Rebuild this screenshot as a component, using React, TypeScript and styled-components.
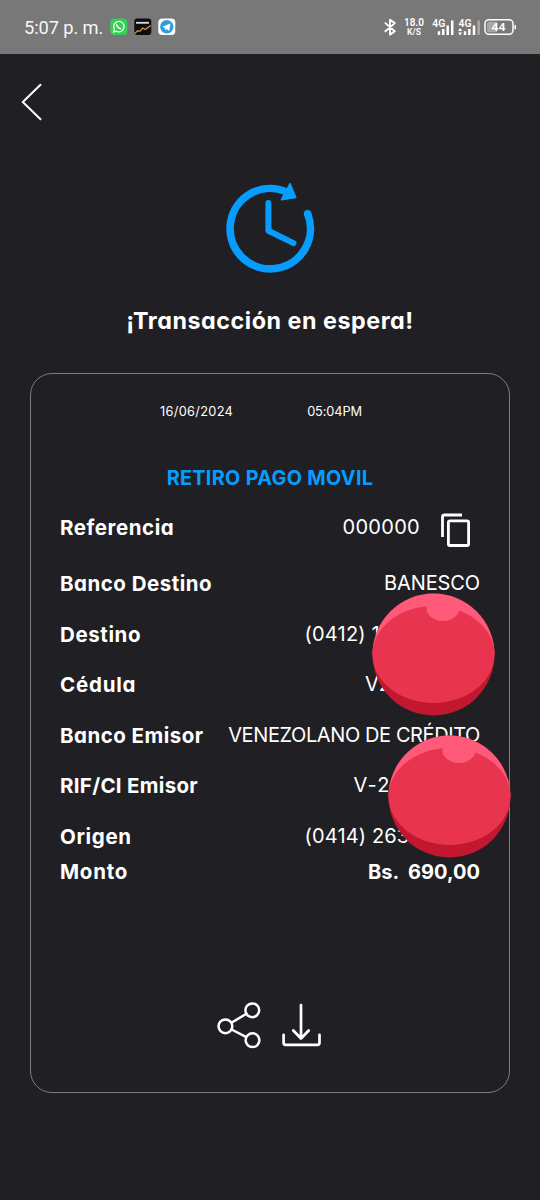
import React from 'react';
import styled, { createGlobalStyle } from 'styled-components';

const Global = createGlobalStyle`
  * { box-sizing: border-box; }
  body { margin: 0; background: #202024; }
`;

const Screen = styled.div`
  width: 540px;
  height: 1200px;
  display: flex;
  flex-direction: column;
  background: #202024;
  color: #fff;
  font-family: Inter, sans-serif;
  font-feature-settings: 'cv11';
`;

const StatusBar = styled.header`
  height: 54px;
  flex: none;
  padding: 0 23px 0 24px;
  display: flex;
  align-items: center;
  justify-content: space-between;
  background: #787878;
  font-family: Roboto, sans-serif;
`;

const Group = styled.div<{ $gap: number }>`
  display: flex;
  align-items: center;
  gap: ${(p) => p.$gap}px;
`;

const Clock = styled.span`
  margin-top: 1px;
  font-size: 18.3px;
  letter-spacing: -0.1px;
  line-height: 24px;
  color: #f6f6f6;
  white-space: nowrap;
`;

const Speed = styled.div`
  width: 20px;
  display: flex;
  flex-direction: column;
  align-items: center;
  font-weight: 600;
  white-space: nowrap;
`;

const SpeedValue = styled.span`
  font-size: 10px;
  line-height: 10px;
`;

const SpeedUnit = styled.span`
  font-size: 8.5px;
  line-height: 9px;
`;

const SvgText = styled.text`
  font-family: Roboto, sans-serif;
  font-weight: 600;
  fill: #fff;
`;

const NavBar = styled.nav`
  height: 96px;
  flex: none;
  padding: 29px 0 0 21px;
`;

const Hero = styled.section`
  height: 223px;
  flex: none;
  padding-top: 32px;
  display: flex;
  flex-direction: column;
  align-items: center;
`;

const Txt = styled.span<{ $size: number; $weight?: number; $ls?: number }>`
  font-size: ${(p) => p.$size}px;
  font-weight: ${(p) => p.$weight ?? 400};
  letter-spacing: ${(p) => p.$ls ?? 0}px;
  line-height: 28px;
  white-space: pre;
`;

const Heading = styled(Txt)`
  margin: 33px 0 0;
`;

const Card = styled.main`
  position: relative;
  height: 720px;
  flex: none;
  margin: 0 30px;
  padding: 24px 29px 0;
  border: 1px solid #7d7d81;
  border-radius: 22px;
  display: flex;
  flex-direction: column;
`;

const Stamp = styled.div`
  display: flex;
  gap: 74px;
  padding-left: 100px;
`;

const Kind = styled(Txt)`
  margin: 38px 0 5px;
  text-align: center;
  color: #079dff;
`;

const Row = styled.div<{ $h: number }>`
  height: ${(p) => p.$h}px;
  display: flex;
  align-items: center;
  justify-content: space-between;
`;

const Value = styled.div<{ $width?: number; $strong?: boolean }>`
  display: flex;
  align-items: center;
  width: ${(p) => (p.$width ? `${p.$width}px` : 'auto')};
  margin-top: ${(p) => (p.$strong ? 0 : -2)}px;
`;

const CopyIcon = styled.svg`
  margin: 5px 10px 0 21px;
`;

const Actions = styled.div`
  display: flex;
  gap: 21px;
  margin: 118px 0 0 157px;
`;

const Ball = styled.svg<{ $x: number; $y: number }>`
  position: absolute;
  left: ${(p) => p.$x}px;
  top: ${(p) => p.$y}px;
`;

type Item = {
  label: string;
  value: string;
  labelSpacing: number;
  valueSpacing?: number;
  width?: number;
  strong?: boolean;
  height?: number;
};

const rows: Item[] = [
  { label: 'Banco Destino', value: 'BANESCO', labelSpacing: 0.5, valueSpacing: -0.1 },
  { label: 'Destino', value: '(0412) 1', labelSpacing: 0.6, valueSpacing: 0.2, width: 175.5 },
  { label: 'Cédula', value: 'V2', labelSpacing: 0.8, width: 115 },
  { label: 'Banco Emisor', value: 'VENEZOLANO DE CRÉDITO', labelSpacing: 0.48, valueSpacing: -0.4 },
  { label: 'RIF/CI Emisor', value: 'V-2', labelSpacing: 0.3, valueSpacing: 1.2, width: 126.5 },
  { label: 'Origen', value: '(0414) 263', labelSpacing: 0.65, valueSpacing: 0.15, width: 175.5 },
  { label: 'Monto', value: 'Bs.  690,00', labelSpacing: 0.75, strong: true, height: 20.5 },
];

const RedBall = ({ x, y }: { x: number; y: number }) => (
  <Ball $x={x} $y={y} width="123" height="123" viewBox="-0.5 -0.5 123 123">
    <circle cx="61" cy="61" r="61" fill="#c1182f" />
    <path d="M0 61a61 61 0 0 1 122 0z" fill="#ff5a79" />
    <ellipse cx="61" cy="61" rx="61" ry="48.5" fill="#e8344f" />
    <ellipse cx="70.5" cy="15" rx="16.5" ry="12.5" fill="#ff5a79" />
  </Ball>
);

const AppIcons = () => (
  <svg width="66" height="18" viewBox="0 0 66 18" fill="none">
    <rect width="17" height="16.6" x=".3" y=".5" rx="4" fill="#35cf55" />
    <path d="M3.600 14l.8-2.800A5.200 5.200 0 1 1 6.500 13.200z" stroke="#fff" strokeWidth="1.200" />
    <path d="M6.800 6.200c-.8 1.500 2.600 5 4.400 4.200" stroke="#fff" strokeWidth="1.500" />
    <rect width="17" height="16.6" x="24.300" y=".5" rx="3" fill="#0c0c0d" />
    <path d="M26 4.800h13" stroke="#ddd" strokeWidth="1.800" />
    <path d="M24.600 15.500l3.200-2.800 2 .6 3-3.300 2.400 1.600L40.800 7.500" stroke="#e69a35" strokeWidth="1.200" />
    <rect width="17" height="16.6" x="48.300" y=".5" rx="4" fill="#fff" />
    <circle cx="56.800" cy="8.800" r="6.700" fill="#2c9fd8" />
    <path d="M52.300 8.800l8.200-3.300-1.300 7.400-2.500-1.800-1.300 1.300-.4-2.300z" fill="#fff" />
  </svg>
);

const Bluetooth = () => (
  <svg width="14" height="18" viewBox="383 18 14 18" fill="none">
    <path
      d="M384.800 22.600l10 8.600-4.800 3.400V19.700l4.800 3.400-10 8.600"
      stroke="#fff"
      strokeWidth="1.900"
      strokeLinejoin="round"
    />
  </svg>
);

const SignalAndBattery = () => (
  <svg width="86" height="20" viewBox="431 17 86 20" fill="none">
    <SvgText x="432.300" y="27" fontSize="10" textLength="13" lengthAdjust="spacingAndGlyphs">4G</SvgText>
    <path d="M439 35v-3.700M443.200 35v-6M447.700 35v-9.500M452.200 35V20.500" stroke="#fff" strokeWidth="2.500" />
    <SvgText x="458.600" y="27" fontSize="10" textLength="13" lengthAdjust="spacingAndGlyphs">4G</SvgText>
    <path d="M458 31l2.100-3 2.100 3zM458 32.400l2.100 3 2.100-3z" fill="#fff" />
    <path d="M465 35v-3.700M469.300 35v-6M474 35v-9.500" stroke="#fff" strokeWidth="2.500" />
    <path d="M478.700 35V20.500" stroke="#a9a9a9" strokeWidth="2.500" />
    <rect x="485" y="19.700" width="28" height="14.600" rx="4" stroke="#fff" strokeWidth="1.500" />
    <path d="M489 21.800h8v10.400h-8a2 2 0 0 1-2-2v-6.400a2 2 0 0 1 2-2z" fill="#a8a8a8" />
    <path d="M515.200 25v4.200" stroke="#fff" strokeWidth="1.500" />
    <SvgText x="491.500" y="31" fontSize="11" textLength="14" lengthAdjust="spacingAndGlyphs">44</SvgText>
  </svg>
);

const PendingIcon = () => (
  <svg width="92" height="92" viewBox="224 182 92 92" fill="none">
    <path
      d="M286.600 191.900A40.200 40.200 0 1 0 307.600 213.700"
      stroke="#079dff"
      strokeWidth="7.600"
    />
    <circle cx="307.600" cy="213.700" r="3.800" fill="#079dff" />
    <path
      d="M290 183.800l5.600 13.500-14 2.400z"
      fill="#079dff"
      stroke="#079dff"
      strokeWidth="1.800"
      strokeLinejoin="round"
    />
    <path
      d="M268.400 203v27.700l25.100 12.400"
      stroke="#079dff"
      strokeWidth="6"
      strokeLinecap="round"
      strokeLinejoin="round"
    />
  </svg>
);

export default function App() {
  return (
    <Screen>
      <Global />
      <StatusBar>
        <Group $gap={7}>
          <Clock>5:07 p. m.</Clock>
          <AppIcons />
        </Group>
        <Group $gap={7}>
          <Bluetooth />
          <Speed>
            <SpeedValue>18.0</SpeedValue>
            <SpeedUnit>K/S</SpeedUnit>
          </Speed>
          <SignalAndBattery />
        </Group>
      </StatusBar>
      <NavBar>
        <svg width="22" height="38" viewBox="0 0 22 38" fill="none">
          <path d="M19.500 1.800L1.800 19l17.700 17.200" stroke="#fff" strokeWidth="2" strokeLinecap="round" />
        </svg>
      </NavBar>
      <Hero>
        <PendingIcon />
        <Heading as="h1" $size={23.3} $weight={700} $ls={0.53}>¡Transacción en espera!</Heading>
      </Hero>
      <Card>
        <Stamp>
          <Txt $size={12.8} $ls={0.3}>16/06/2024</Txt>
          <Txt $size={12.8} $ls={-0.1}>05:04PM</Txt>
        </Stamp>
        <Kind as="h2" $size={19.8} $weight={700} $ls={0.34}>RETIRO PAGO MOVIL</Kind>
        <Row $h={62}>
          <Txt $size={20.5} $weight={700} $ls={0.55}>Referencia</Txt>
          <Value>
            <Txt $size={20} $ls={0.3}>000000</Txt>
            <CopyIcon width="29" height="34" viewBox="441 512.500 29 34" fill="none" stroke="#fff" strokeWidth="2.800">
              <path d="M442.500 536.500v-20a2 2 0 0 1 2-2H462" />
              <rect x="448.400" y="520.400" width="20.200" height="24.600" rx="1.500" />
            </CopyIcon>
          </Value>
        </Row>
        {rows.map((r) => (
          <Row key={r.label} $h={r.height ?? 50.5}>
            <Txt $size={20.5} $weight={700} $ls={r.labelSpacing}>{r.label}</Txt>
            <Value $width={r.width} $strong={r.strong}>
              <Txt $size={20} $weight={r.strong ? 700 : 400} $ls={r.valueSpacing}>{r.value}</Txt>
            </Value>
          </Row>
        ))}
        <Actions>
          <svg width="44" height="48" viewBox="217 1001 44 48" fill="none" stroke="#fff" strokeWidth="2.500">
            <circle cx="252.300" cy="1010.300" r="6.900" />
            <circle cx="225.400" cy="1026.300" r="6.900" />
            <circle cx="252.500" cy="1040.200" r="6.900" />
            <path d="M231.400 1022.800l15-9M231.600 1029.500l14.800 7.600" />
          </svg>
          <svg
            width="41"
            height="48"
            viewBox="282 1001 41 48"
            fill="none"
            stroke="#fff"
            strokeWidth="2.700"
            strokeLinecap="round"
            strokeLinejoin="round"
          >
            <path d="M301 1005v33.500M293.300 1030.500l7.700 8 7.700-8" />
            <path d="M283.600 1034.800v8a2 2 0 0 0 2 2h31.900a2 2 0 0 0 2-2v-8" />
          </svg>
        </Actions>
        <RedBall x={341} y={219} />
        <RedBall x={357} y={361} />
      </Card>
    </Screen>
  );
}
